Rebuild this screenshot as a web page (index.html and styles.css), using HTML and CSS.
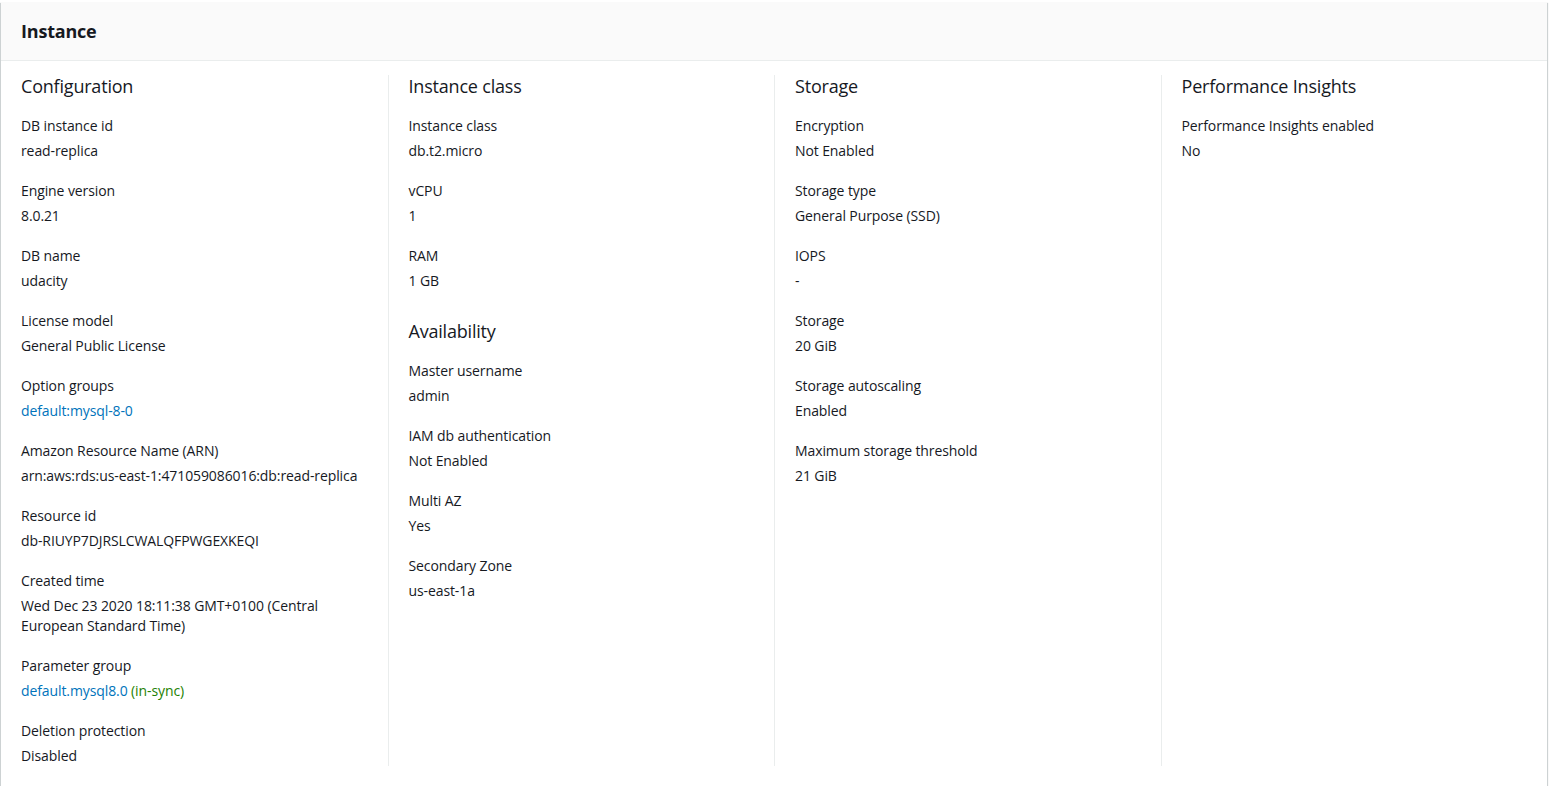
FILE: index.html
```html
<!DOCTYPE html>
<html>
<head>
<meta charset="utf-8">
<link rel="stylesheet" href="styles.css">
</head>
<body>
<div class="card">
  <div class="card-header"><h2>Instance</h2></div>
  <div class="columns">
    <div class="col">
      <div class="section">
        <h3>Configuration</h3>
        <div class="items">
          <div class="item"><div class="label">DB instance id</div><div class="value">read-replica</div></div>
          <div class="item"><div class="label">Engine version</div><div class="value">8.0.21</div></div>
          <div class="item"><div class="label">DB name</div><div class="value">udacity</div></div>
          <div class="item"><div class="label">License model</div><div class="value">General Public License</div></div>
          <div class="item"><div class="label">Option groups</div><div class="value"><a class="link">default:mysql-8-0</a></div></div>
          <div class="item"><div class="label">Amazon Resource Name (ARN)</div><div class="value">arn:aws:rds:us-east-1:471059086016:db:read-replica</div></div>
          <div class="item"><div class="label">Resource id</div><div class="value">db-RIUYP7DJRSLCWALQFPWGEXKEQI</div></div>
          <div class="item"><div class="label">Created time</div><div class="value">Wed Dec 23 2020 18:11:38 GMT+0100 (Central European Standard Time)</div></div>
          <div class="item"><div class="label">Parameter group</div><div class="value"><a class="link">default.mysql8.0</a> <span class="ok">(in-sync)</span></div></div>
          <div class="item"><div class="label">Deletion protection</div><div class="value">Disabled</div></div>
        </div>
      </div>
    </div>
    <div class="col">
      <div class="section">
        <h3>Instance class</h3>
        <div class="items">
          <div class="item"><div class="label">Instance class</div><div class="value">db.t2.micro</div></div>
          <div class="item"><div class="label">vCPU</div><div class="value">1</div></div>
          <div class="item"><div class="label">RAM</div><div class="value">1 GB</div></div>
        </div>
      </div>
      <div class="section">
        <h3>Availability</h3>
        <div class="items">
          <div class="item"><div class="label">Master username</div><div class="value">admin</div></div>
          <div class="item"><div class="label">IAM db authentication</div><div class="value">Not Enabled</div></div>
          <div class="item"><div class="label">Multi AZ</div><div class="value">Yes</div></div>
          <div class="item"><div class="label">Secondary Zone</div><div class="value">us-east-1a</div></div>
        </div>
      </div>
    </div>
    <div class="col">
      <div class="section">
        <h3>Storage</h3>
        <div class="items">
          <div class="item"><div class="label">Encryption</div><div class="value">Not Enabled</div></div>
          <div class="item"><div class="label">Storage type</div><div class="value">General Purpose (SSD)</div></div>
          <div class="item"><div class="label">IOPS</div><div class="value">-</div></div>
          <div class="item"><div class="label">Storage</div><div class="value">20 GiB</div></div>
          <div class="item"><div class="label">Storage autoscaling</div><div class="value">Enabled</div></div>
          <div class="item"><div class="label">Maximum storage threshold</div><div class="value">21 GiB</div></div>
        </div>
      </div>
    </div>
    <div class="col">
      <div class="section">
        <h3>Performance Insights</h3>
        <div class="items">
          <div class="item"><div class="label">Performance Insights enabled</div><div class="value">No</div></div>
        </div>
      </div>
    </div>
  </div>
</div>
</body>
</html>
```

FILE: styles.css
```css
html, body {
  margin: 0;
  padding: 0;
  background: #ffffff;
}
body {
  font-family: "Open Sans", "Noto Sans", sans-serif;
  color: #16191f;
  font-size: 14px;
  line-height: 20px;
  letter-spacing: -0.1px;
}
.card {
  margin: 2px 2px 0 1px;
  background: #fff;
  box-shadow: 0 1px 1px 0 rgba(0,28,36,0.3), 1px 1px 1px 0 rgba(0,28,36,0.15), -1px 1px 1px 0 rgba(0,28,36,0.15);
  padding-bottom: 20px;
}
.card-header {
  background: #fafafa;
  border-bottom: 1px solid #eaeded;
  padding: 18px 20px 18px;
}
.card-header h2 {
  margin: 0;
  font-size: 18px;
  line-height: 22px;
  font-weight: 700;
  letter-spacing: -0.2px;
}
.columns {
  display: grid;
  grid-template-columns: repeat(4, 1fr);
  padding-top: 14px;
}
.col {
  padding: 0 20px;
  border-left: 1px solid #eaeded;
  display: flex;
  flex-direction: column;
  gap: 29px;
}
.col:first-child {
  border-left: none;
}
.section h3 {
  margin: 0 0 19px;
  font-size: 18px;
  line-height: 22px;
  font-weight: 400;
  letter-spacing: -0.2px;
}
.items {
  display: flex;
  flex-direction: column;
  gap: 20px;
}
.item {
  display: flex;
  flex-direction: column;
  gap: 5px;
}
.link {
  color: #0073bb;
  text-decoration: none;
}
.ok {
  color: #1d8102;
}
```
